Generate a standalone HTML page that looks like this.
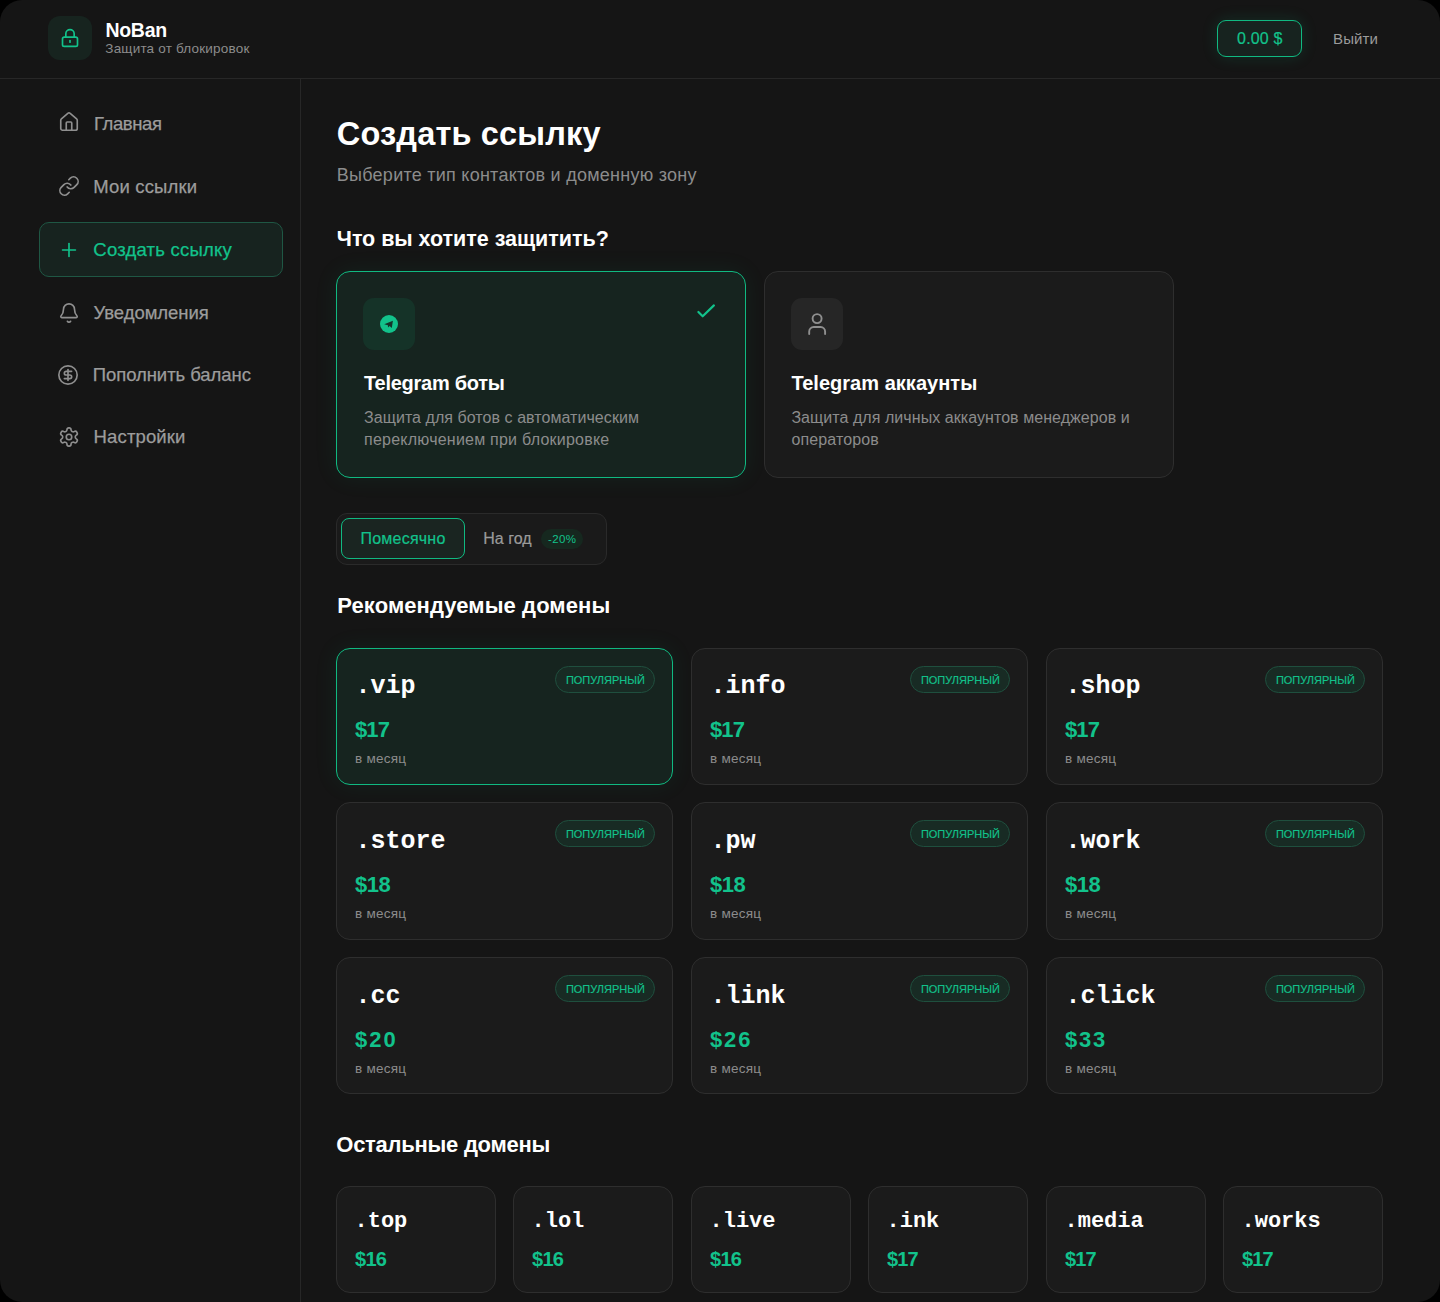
<!DOCTYPE html>
<html><head><meta charset="utf-8"><title>NoBan</title>
<style>
html,body{margin:0;padding:0;background:#000;width:1440px;height:1302px;overflow:hidden}
#w{position:relative;width:1440px;height:1302px;background:#151515;border-radius:22px;overflow:hidden}
.t{position:absolute;white-space:pre}
.r{position:absolute;box-sizing:content-box}
.i{position:absolute;overflow:visible}
</style></head><body><div id="w">
<div class="r" style="left:48px;top:16px;width:44px;height:44px;background:#17241f;border-radius:12px;"></div>
<svg class="i" style="left:60px;top:28px;" width="20" height="20" viewBox="0 0 24 24" fill="none" stroke="#12c28b" stroke-width="2" stroke-linecap="round" stroke-linejoin="round"><rect width="18" height="11" x="3" y="11" rx="2" ry="2"/><path d="M7 11V7a5 5 0 0 1 10 0v4"/><path d="M12 15v2"/></svg>
<div class="t" style="left:105.50px;top:21.09px;font-family:'Liberation Sans', sans-serif;font-weight:700;font-size:19.5px;line-height:19.5px;letter-spacing:-0.312px;color:#ffffff;">NoBan</div>
<div class="t" style="left:105.30px;top:41.87px;font-family:'Liberation Sans', sans-serif;font-weight:400;font-size:13.5px;line-height:13.5px;letter-spacing:0.195px;color:#8c8c8c;">Защита от блокировок</div>
<div class="r" style="left:1217px;top:20px;width:83px;height:35px;background:#17231f;border:1px solid #10b981;border-radius:9px;box-shadow:0 0 16px rgba(16,185,129,0.16);"></div>
<div class="t" style="left:1237.10px;top:30.81px;font-family:'Liberation Sans', sans-serif;font-weight:400;font-size:16px;line-height:16px;letter-spacing:0.160px;color:#12c28b;-webkit-text-stroke:0.2px #12c28b;">0.00 $</div>
<div class="t" style="left:1333.00px;top:31.10px;font-family:'Liberation Sans', sans-serif;font-weight:400;font-size:15px;line-height:15px;letter-spacing:0.125px;color:#9b9b9b;">Выйти</div>
<div class="r" style="left:0;top:78px;width:1440px;height:1px;background:#272727"></div>
<div class="r" style="left:300px;top:79px;width:1px;height:1223px;background:#272727"></div>
<div class="r" style="left:39px;top:222px;width:242px;height:53px;background:#17231f;border:1px solid #1f5744;border-radius:10px;"></div>
<svg class="i" style="left:58px;top:111.4px;" width="22" height="22" viewBox="0 0 24 24" fill="none" stroke="#8f8f8f" stroke-width="1.8" stroke-linecap="round" stroke-linejoin="round"><path d="M15 21v-8a1 1 0 0 0-1-1h-4a1 1 0 0 0-1 1v8"/><path d="M3 10a2 2 0 0 1 .709-1.528l7-5.999a2 2 0 0 1 2.582 0l7 5.999A2 2 0 0 1 21 10v9a2 2 0 0 1-2 2H5a2 2 0 0 1-2-2z"/></svg>
<div class="t" style="left:94.03px;top:115.14px;font-family:'Liberation Sans', sans-serif;font-weight:400;font-size:18.5px;line-height:18.5px;letter-spacing:-0.408px;color:#9c9c9c;-webkit-text-stroke:0.25px #9c9c9c;">Главная</div>
<svg class="i" style="left:58px;top:175px;" width="22" height="22" viewBox="0 0 24 24" fill="none" stroke="#8f8f8f" stroke-width="1.8" stroke-linecap="round" stroke-linejoin="round"><path d="M10 13a5 5 0 0 0 7.54.54l3-3a5 5 0 0 0-7.07-7.07l-1.72 1.71"/><path d="M14 11a5 5 0 0 0-7.54-.54l-3 3a5 5 0 0 0 7.07 7.07l1.71-1.71"/></svg>
<div class="t" style="left:93.33px;top:177.94px;font-family:'Liberation Sans', sans-serif;font-weight:400;font-size:18.5px;line-height:18.5px;letter-spacing:0.139px;color:#9c9c9c;-webkit-text-stroke:0.25px #9c9c9c;">Мои ссылки</div>
<svg class="i" style="left:58px;top:239px;" width="22" height="22" viewBox="0 0 24 24" fill="none" stroke="#12c28b" stroke-width="1.8" stroke-linecap="round" stroke-linejoin="round"><path d="M5 12h14"/><path d="M12 5v14"/></svg>
<div class="t" style="left:93.33px;top:241.14px;font-family:'Liberation Sans', sans-serif;font-weight:400;font-size:18.5px;line-height:18.5px;letter-spacing:0.219px;color:#12c28b;-webkit-text-stroke:0.25px #12c28b;">Создать ссылку</div>
<svg class="i" style="left:58px;top:302px;" width="22" height="22" viewBox="0 0 24 24" fill="none" stroke="#8f8f8f" stroke-width="1.8" stroke-linecap="round" stroke-linejoin="round"><path d="M10.268 21a2 2 0 0 0 3.464 0"/><path d="M3.262 15.326A1 1 0 0 0 4 17h16a1 1 0 0 0 .74-1.673C19.41 13.956 18 12.499 18 8A6 6 0 0 0 6 8c0 4.499-1.411 5.956-2.738 7.326"/></svg>
<div class="t" style="left:93.62px;top:303.94px;font-family:'Liberation Sans', sans-serif;font-weight:400;font-size:18.5px;line-height:18.5px;letter-spacing:-0.050px;color:#9c9c9c;-webkit-text-stroke:0.25px #9c9c9c;">Уведомления</div>
<svg class="i" style="left:57px;top:364px;" width="22" height="22" viewBox="0 0 24 24" fill="none" stroke="#8f8f8f" stroke-width="1.8" stroke-linecap="round" stroke-linejoin="round"><circle cx="12" cy="12" r="10"/><path d="M16 8h-6a2 2 0 1 0 0 4h4a2 2 0 1 1 0 4H8"/><path d="M12 18V6"/></svg>
<div class="t" style="left:92.72px;top:365.64px;font-family:'Liberation Sans', sans-serif;font-weight:400;font-size:18.5px;line-height:18.5px;letter-spacing:-0.057px;color:#9c9c9c;-webkit-text-stroke:0.25px #9c9c9c;">Пополнить баланс</div>
<svg class="i" style="left:58px;top:426px;" width="22" height="22" viewBox="0 0 24 24" fill="none" stroke="#8f8f8f" stroke-width="1.8" stroke-linecap="round" stroke-linejoin="round"><path d="M12.22 2h-.44a2 2 0 0 0-2 2v.18a2 2 0 0 1-1 1.73l-.43.25a2 2 0 0 1-2 0l-.15-.08a2 2 0 0 0-2.73.73l-.22.38a2 2 0 0 0 .73 2.73l.15.1a2 2 0 0 1 1 1.72v.51a2 2 0 0 1-1 1.74l-.15.09a2 2 0 0 0-.73 2.73l.22.38a2 2 0 0 0 2.73.73l.15-.08a2 2 0 0 1 2 0l.43.25a2 2 0 0 1 1 1.73V20a2 2 0 0 0 2 2h.44a2 2 0 0 0 2-2v-.18a2 2 0 0 1 1-1.73l.43-.25a2 2 0 0 1 2 0l.15.08a2 2 0 0 0 2.73-.73l.22-.39a2 2 0 0 0-.73-2.73l-.15-.08a2 2 0 0 1-1-1.74v-.5a2 2 0 0 1 1-1.74l.15-.09a2 2 0 0 0 .73-2.73l-.22-.38a2 2 0 0 0-2.73-.73l-.15.08a2 2 0 0 1-2 0l-.43-.25a2 2 0 0 1-1-1.73V4a2 2 0 0 0-2-2z"/><circle cx="12" cy="12" r="3"/></svg>
<div class="t" style="left:93.62px;top:427.64px;font-family:'Liberation Sans', sans-serif;font-weight:400;font-size:18.5px;line-height:18.5px;letter-spacing:0.125px;color:#9c9c9c;-webkit-text-stroke:0.25px #9c9c9c;">Настройки</div>
<div class="t" style="left:336.80px;top:118.09px;font-family:'Liberation Sans', sans-serif;font-weight:700;font-size:32.5px;line-height:32.5px;letter-spacing:0.169px;color:#ffffff;">Создать ссылку</div>
<div class="t" style="left:336.80px;top:166.36px;font-family:'Liberation Sans', sans-serif;font-weight:400;font-size:18px;line-height:18px;letter-spacing:0.253px;color:#8c8c8c;">Выберите тип контактов и доменную зону</div>
<div class="t" style="left:336.80px;top:229.20px;font-family:'Liberation Sans', sans-serif;font-weight:700;font-size:21.5px;line-height:21.5px;letter-spacing:-0.027px;color:#ffffff;">Что вы хотите защитить?</div>
<div class="r" style="left:336px;top:271px;width:408px;height:205px;background:#16241f;border:1px solid #10b981;border-radius:14px;box-shadow:0 0 24px rgba(16,185,129,0.08);"></div>
<div class="r" style="left:764px;top:271px;width:408px;height:205px;background:#1b1b1b;border:1px solid #2e2e2e;border-radius:14px;"></div>
<div class="r" style="left:363px;top:298px;width:52px;height:52px;background:#153328;border-radius:11px;"></div>
<div class="r" style="left:791px;top:298px;width:52px;height:52px;background:#262626;border-radius:11px;"></div>
<svg class="i" style="left:379px;top:314px" width="20" height="20" viewBox="0 0 20 20"><circle cx="10" cy="10" r="9" fill="#12c28b"/><path d="M5.2 10.2 L13.9 6.8 L12.8 13.9 L10.6 12.1 L9 13.6 L8.9 11.3 Z" fill="#15332a"/></svg>
<svg class="i" style="left:690px;top:296px" width="30" height="30" viewBox="0 0 30 30" fill="none" stroke="#12c28b" stroke-width="2.2" stroke-linecap="round" stroke-linejoin="round"><path d="M8.4 16 L12.7 20.3 L23.9 9.4"/></svg>
<svg class="i" style="left:797px;top:304px" width="40" height="40" viewBox="0 0 40 40" fill="none" stroke="#8f8f8f" stroke-width="1.9" stroke-linecap="round" stroke-linejoin="round"><circle cx="20.1" cy="14.6" r="4.5"/><path d="M12.2 30 V27.5 a4.5 4.5 0 0 1 4.5 -4.5 h6.9 a4.5 4.5 0 0 1 4.5 4.5 V30"/></svg>
<div class="t" style="left:364.10px;top:372.87px;font-family:'Liberation Sans', sans-serif;font-weight:700;font-size:20px;line-height:20px;letter-spacing:-0.258px;color:#ffffff;">Telegram боты</div>
<div class="t" style="left:791.40px;top:372.87px;font-family:'Liberation Sans', sans-serif;font-weight:700;font-size:20px;line-height:20px;letter-spacing:0.031px;color:#ffffff;">Telegram аккаунты</div>
<div class="t" style="left:364.00px;top:409.86px;font-family:'Liberation Sans', sans-serif;font-weight:400;font-size:16px;line-height:16px;letter-spacing:0.055px;color:#8c8c8c;">Защита для ботов с автоматическим</div>
<div class="t" style="left:364.00px;top:431.86px;font-family:'Liberation Sans', sans-serif;font-weight:400;font-size:16px;line-height:16px;letter-spacing:0.230px;color:#8c8c8c;">переключением при блокировке</div>
<div class="t" style="left:791.40px;top:409.86px;font-family:'Liberation Sans', sans-serif;font-weight:400;font-size:16px;line-height:16px;letter-spacing:0.059px;color:#8c8c8c;">Защита для личных аккаунтов менеджеров и</div>
<div class="t" style="left:791.40px;top:431.86px;font-family:'Liberation Sans', sans-serif;font-weight:400;font-size:16px;line-height:16px;letter-spacing:0.128px;color:#8c8c8c;">операторов</div>
<div class="r" style="left:336px;top:513px;width:269px;height:50px;background:#1a1a1a;border:1px solid #2a2a2a;border-radius:11px;"></div>
<div class="r" style="left:341px;top:518px;width:122px;height:39px;background:#1a2521;border:1px solid #10b981;border-radius:8px;"></div>
<div class="t" style="left:360.50px;top:531.06px;font-family:'Liberation Sans', sans-serif;font-weight:400;font-size:16px;line-height:16px;letter-spacing:0.225px;color:#12c28b;-webkit-text-stroke:0.2px #12c28b;">Помесячно</div>
<div class="t" style="left:483.20px;top:531.06px;font-family:'Liberation Sans', sans-serif;font-weight:400;font-size:16px;line-height:16px;letter-spacing:0.030px;color:#9b9b9b;-webkit-text-stroke:0.2px #9b9b9b;">На год</div>
<div class="r" style="left:541px;top:529px;width:42px;height:20px;background:#16281f;border-radius:10px;"></div>
<div class="t" style="left:548.00px;top:533.87px;font-family:'Liberation Sans', sans-serif;font-weight:400;font-size:11.5px;line-height:11.5px;letter-spacing:0.417px;color:#12c28b;">-20%</div>
<div class="t" style="left:337.30px;top:595.28px;font-family:'Liberation Sans', sans-serif;font-weight:700;font-size:22px;line-height:22px;letter-spacing:0.087px;color:#ffffff;">Рекомендуемые домены</div>
<div class="r" style="left:336px;top:648px;width:335px;height:135px;background:#16241f;border:1px solid #10b981;border-radius:14px;box-shadow:0 0 24px rgba(16,185,129,0.08);"></div>
<div class="t" style="left:355.5px;top:674.04px;font-family:'Liberation Mono', monospace;font-weight:700;font-size:25px;line-height:25px;color:#fff">.vip</div>
<div class="r" style="left:555px;top:666px;width:98px;height:25px;background:#182b24;border:1px solid #1f4f3e;border-radius:14px;"></div>
<div class="t" style="left:565.88px;top:675.39px;font-family:'Liberation Sans', sans-serif;font-weight:400;font-size:11px;line-height:11px;letter-spacing:-0.017px;color:#12c28b;-webkit-text-stroke:0.15px #12c28b;">ПОПУЛЯРНЫЙ</div>
<div class="t" style="left:355.00px;top:718.78px;font-family:'Liberation Sans', sans-serif;font-weight:700;font-size:22px;line-height:22px;letter-spacing:-0.875px;color:#12c28b;">$17</div>
<div class="t" style="left:355.10px;top:751.97px;font-family:'Liberation Sans', sans-serif;font-weight:400;font-size:13.5px;line-height:13.5px;letter-spacing:0.217px;color:#8c8c8c;">в месяц</div>
<div class="r" style="left:691px;top:648px;width:335px;height:135px;background:#1b1b1b;border:1px solid #2e2e2e;border-radius:14px;"></div>
<div class="t" style="left:710.5px;top:674.04px;font-family:'Liberation Mono', monospace;font-weight:700;font-size:25px;line-height:25px;color:#fff">.info</div>
<div class="r" style="left:910px;top:666px;width:98px;height:25px;background:#182b24;border:1px solid #1f4f3e;border-radius:14px;"></div>
<div class="t" style="left:920.88px;top:675.39px;font-family:'Liberation Sans', sans-serif;font-weight:400;font-size:11px;line-height:11px;letter-spacing:-0.017px;color:#12c28b;-webkit-text-stroke:0.15px #12c28b;">ПОПУЛЯРНЫЙ</div>
<div class="t" style="left:710.00px;top:718.78px;font-family:'Liberation Sans', sans-serif;font-weight:700;font-size:22px;line-height:22px;letter-spacing:-0.875px;color:#12c28b;">$17</div>
<div class="t" style="left:710.10px;top:751.97px;font-family:'Liberation Sans', sans-serif;font-weight:400;font-size:13.5px;line-height:13.5px;letter-spacing:0.217px;color:#8c8c8c;">в месяц</div>
<div class="r" style="left:1046px;top:648px;width:335px;height:135px;background:#1b1b1b;border:1px solid #2e2e2e;border-radius:14px;"></div>
<div class="t" style="left:1065.5px;top:674.04px;font-family:'Liberation Mono', monospace;font-weight:700;font-size:25px;line-height:25px;color:#fff">.shop</div>
<div class="r" style="left:1265px;top:666px;width:98px;height:25px;background:#182b24;border:1px solid #1f4f3e;border-radius:14px;"></div>
<div class="t" style="left:1275.88px;top:675.39px;font-family:'Liberation Sans', sans-serif;font-weight:400;font-size:11px;line-height:11px;letter-spacing:-0.017px;color:#12c28b;-webkit-text-stroke:0.15px #12c28b;">ПОПУЛЯРНЫЙ</div>
<div class="t" style="left:1065.00px;top:718.78px;font-family:'Liberation Sans', sans-serif;font-weight:700;font-size:22px;line-height:22px;letter-spacing:-0.875px;color:#12c28b;">$17</div>
<div class="t" style="left:1065.10px;top:751.97px;font-family:'Liberation Sans', sans-serif;font-weight:400;font-size:13.5px;line-height:13.5px;letter-spacing:0.217px;color:#8c8c8c;">в месяц</div>
<div class="r" style="left:336px;top:802px;width:335px;height:136px;background:#1b1b1b;border:1px solid #2e2e2e;border-radius:14px;"></div>
<div class="t" style="left:355.5px;top:828.84px;font-family:'Liberation Mono', monospace;font-weight:700;font-size:25px;line-height:25px;color:#fff">.store</div>
<div class="r" style="left:555px;top:820px;width:98px;height:25px;background:#182b24;border:1px solid #1f4f3e;border-radius:14px;"></div>
<div class="t" style="left:565.88px;top:829.39px;font-family:'Liberation Sans', sans-serif;font-weight:400;font-size:11px;line-height:11px;letter-spacing:-0.017px;color:#12c28b;-webkit-text-stroke:0.15px #12c28b;">ПОПУЛЯРНЫЙ</div>
<div class="t" style="left:355.00px;top:873.58px;font-family:'Liberation Sans', sans-serif;font-weight:700;font-size:22px;line-height:22px;letter-spacing:-0.525px;color:#12c28b;">$18</div>
<div class="t" style="left:355.10px;top:906.77px;font-family:'Liberation Sans', sans-serif;font-weight:400;font-size:13.5px;line-height:13.5px;letter-spacing:0.217px;color:#8c8c8c;">в месяц</div>
<div class="r" style="left:691px;top:802px;width:335px;height:136px;background:#1b1b1b;border:1px solid #2e2e2e;border-radius:14px;"></div>
<div class="t" style="left:710.5px;top:828.84px;font-family:'Liberation Mono', monospace;font-weight:700;font-size:25px;line-height:25px;color:#fff">.pw</div>
<div class="r" style="left:910px;top:820px;width:98px;height:25px;background:#182b24;border:1px solid #1f4f3e;border-radius:14px;"></div>
<div class="t" style="left:920.88px;top:829.39px;font-family:'Liberation Sans', sans-serif;font-weight:400;font-size:11px;line-height:11px;letter-spacing:-0.017px;color:#12c28b;-webkit-text-stroke:0.15px #12c28b;">ПОПУЛЯРНЫЙ</div>
<div class="t" style="left:710.00px;top:873.58px;font-family:'Liberation Sans', sans-serif;font-weight:700;font-size:22px;line-height:22px;letter-spacing:-0.525px;color:#12c28b;">$18</div>
<div class="t" style="left:710.10px;top:906.77px;font-family:'Liberation Sans', sans-serif;font-weight:400;font-size:13.5px;line-height:13.5px;letter-spacing:0.217px;color:#8c8c8c;">в месяц</div>
<div class="r" style="left:1046px;top:802px;width:335px;height:136px;background:#1b1b1b;border:1px solid #2e2e2e;border-radius:14px;"></div>
<div class="t" style="left:1065.5px;top:828.84px;font-family:'Liberation Mono', monospace;font-weight:700;font-size:25px;line-height:25px;color:#fff">.work</div>
<div class="r" style="left:1265px;top:820px;width:98px;height:25px;background:#182b24;border:1px solid #1f4f3e;border-radius:14px;"></div>
<div class="t" style="left:1275.88px;top:829.39px;font-family:'Liberation Sans', sans-serif;font-weight:400;font-size:11px;line-height:11px;letter-spacing:-0.017px;color:#12c28b;-webkit-text-stroke:0.15px #12c28b;">ПОПУЛЯРНЫЙ</div>
<div class="t" style="left:1065.00px;top:873.58px;font-family:'Liberation Sans', sans-serif;font-weight:700;font-size:22px;line-height:22px;letter-spacing:-0.525px;color:#12c28b;">$18</div>
<div class="t" style="left:1065.10px;top:906.77px;font-family:'Liberation Sans', sans-serif;font-weight:400;font-size:13.5px;line-height:13.5px;letter-spacing:0.217px;color:#8c8c8c;">в месяц</div>
<div class="r" style="left:336px;top:957px;width:335px;height:135px;background:#1b1b1b;border:1px solid #2e2e2e;border-radius:14px;"></div>
<div class="t" style="left:355.5px;top:983.84px;font-family:'Liberation Mono', monospace;font-weight:700;font-size:25px;line-height:25px;color:#fff">.cc</div>
<div class="r" style="left:555px;top:975px;width:98px;height:25px;background:#182b24;border:1px solid #1f4f3e;border-radius:14px;"></div>
<div class="t" style="left:565.88px;top:984.39px;font-family:'Liberation Sans', sans-serif;font-weight:400;font-size:11px;line-height:11px;letter-spacing:-0.017px;color:#12c28b;-webkit-text-stroke:0.15px #12c28b;">ПОПУЛЯРНЫЙ</div>
<div class="t" style="left:355.00px;top:1028.58px;font-family:'Liberation Sans', sans-serif;font-weight:700;font-size:22px;line-height:22px;letter-spacing:2.025px;color:#12c28b;">$20</div>
<div class="t" style="left:355.10px;top:1061.77px;font-family:'Liberation Sans', sans-serif;font-weight:400;font-size:13.5px;line-height:13.5px;letter-spacing:0.217px;color:#8c8c8c;">в месяц</div>
<div class="r" style="left:691px;top:957px;width:335px;height:135px;background:#1b1b1b;border:1px solid #2e2e2e;border-radius:14px;"></div>
<div class="t" style="left:710.5px;top:983.84px;font-family:'Liberation Mono', monospace;font-weight:700;font-size:25px;line-height:25px;color:#fff">.link</div>
<div class="r" style="left:910px;top:975px;width:98px;height:25px;background:#182b24;border:1px solid #1f4f3e;border-radius:14px;"></div>
<div class="t" style="left:920.88px;top:984.39px;font-family:'Liberation Sans', sans-serif;font-weight:400;font-size:11px;line-height:11px;letter-spacing:-0.017px;color:#12c28b;-webkit-text-stroke:0.15px #12c28b;">ПОПУЛЯРНЫЙ</div>
<div class="t" style="left:710.00px;top:1028.58px;font-family:'Liberation Sans', sans-serif;font-weight:700;font-size:22px;line-height:22px;letter-spacing:1.875px;color:#12c28b;">$26</div>
<div class="t" style="left:710.10px;top:1061.77px;font-family:'Liberation Sans', sans-serif;font-weight:400;font-size:13.5px;line-height:13.5px;letter-spacing:0.217px;color:#8c8c8c;">в месяц</div>
<div class="r" style="left:1046px;top:957px;width:335px;height:135px;background:#1b1b1b;border:1px solid #2e2e2e;border-radius:14px;"></div>
<div class="t" style="left:1065.5px;top:983.84px;font-family:'Liberation Mono', monospace;font-weight:700;font-size:25px;line-height:25px;color:#fff">.click</div>
<div class="r" style="left:1265px;top:975px;width:98px;height:25px;background:#182b24;border:1px solid #1f4f3e;border-radius:14px;"></div>
<div class="t" style="left:1275.88px;top:984.39px;font-family:'Liberation Sans', sans-serif;font-weight:400;font-size:11px;line-height:11px;letter-spacing:-0.017px;color:#12c28b;-webkit-text-stroke:0.15px #12c28b;">ПОПУЛЯРНЫЙ</div>
<div class="t" style="left:1065.00px;top:1028.58px;font-family:'Liberation Sans', sans-serif;font-weight:700;font-size:22px;line-height:22px;letter-spacing:1.775px;color:#12c28b;">$33</div>
<div class="t" style="left:1065.10px;top:1061.77px;font-family:'Liberation Sans', sans-serif;font-weight:400;font-size:13.5px;line-height:13.5px;letter-spacing:0.217px;color:#8c8c8c;">в месяц</div>
<div class="t" style="left:336.30px;top:1133.98px;font-family:'Liberation Sans', sans-serif;font-weight:700;font-size:22px;line-height:22px;letter-spacing:-0.267px;color:#ffffff;">Остальные домены</div>
<div class="r" style="left:336px;top:1186px;width:158px;height:105px;background:#1b1b1b;border:1px solid #2e2e2e;border-radius:14px;"></div>
<div class="t" style="left:354.5px;top:1210.54px;font-family:'Liberation Mono', monospace;font-weight:700;font-size:22px;line-height:22px;color:#fff">.top</div>
<div class="t" style="left:355.00px;top:1249.07px;font-family:'Liberation Sans', sans-serif;font-weight:700;font-size:20px;line-height:20px;letter-spacing:-0.700px;color:#12c28b;">$16</div>
<div class="r" style="left:513px;top:1186px;width:158px;height:105px;background:#1b1b1b;border:1px solid #2e2e2e;border-radius:14px;"></div>
<div class="t" style="left:531.5px;top:1210.54px;font-family:'Liberation Mono', monospace;font-weight:700;font-size:22px;line-height:22px;color:#fff">.lol</div>
<div class="t" style="left:532.00px;top:1249.07px;font-family:'Liberation Sans', sans-serif;font-weight:700;font-size:20px;line-height:20px;letter-spacing:-0.700px;color:#12c28b;">$16</div>
<div class="r" style="left:691px;top:1186px;width:158px;height:105px;background:#1b1b1b;border:1px solid #2e2e2e;border-radius:14px;"></div>
<div class="t" style="left:709.5px;top:1210.54px;font-family:'Liberation Mono', monospace;font-weight:700;font-size:22px;line-height:22px;color:#fff">.live</div>
<div class="t" style="left:710.00px;top:1249.07px;font-family:'Liberation Sans', sans-serif;font-weight:700;font-size:20px;line-height:20px;letter-spacing:-0.700px;color:#12c28b;">$16</div>
<div class="r" style="left:868px;top:1186px;width:158px;height:105px;background:#1b1b1b;border:1px solid #2e2e2e;border-radius:14px;"></div>
<div class="t" style="left:886.5px;top:1210.54px;font-family:'Liberation Mono', monospace;font-weight:700;font-size:22px;line-height:22px;color:#fff">.ink</div>
<div class="t" style="left:887.00px;top:1249.07px;font-family:'Liberation Sans', sans-serif;font-weight:700;font-size:20px;line-height:20px;letter-spacing:-0.850px;color:#12c28b;">$17</div>
<div class="r" style="left:1046px;top:1186px;width:158px;height:105px;background:#1b1b1b;border:1px solid #2e2e2e;border-radius:14px;"></div>
<div class="t" style="left:1064.5px;top:1210.54px;font-family:'Liberation Mono', monospace;font-weight:700;font-size:22px;line-height:22px;color:#fff">.media</div>
<div class="t" style="left:1065.00px;top:1249.07px;font-family:'Liberation Sans', sans-serif;font-weight:700;font-size:20px;line-height:20px;letter-spacing:-0.850px;color:#12c28b;">$17</div>
<div class="r" style="left:1223px;top:1186px;width:158px;height:105px;background:#1b1b1b;border:1px solid #2e2e2e;border-radius:14px;"></div>
<div class="t" style="left:1241.5px;top:1210.54px;font-family:'Liberation Mono', monospace;font-weight:700;font-size:22px;line-height:22px;color:#fff">.works</div>
<div class="t" style="left:1242.00px;top:1249.07px;font-family:'Liberation Sans', sans-serif;font-weight:700;font-size:20px;line-height:20px;letter-spacing:-0.850px;color:#12c28b;">$17</div>
</div></body></html>
